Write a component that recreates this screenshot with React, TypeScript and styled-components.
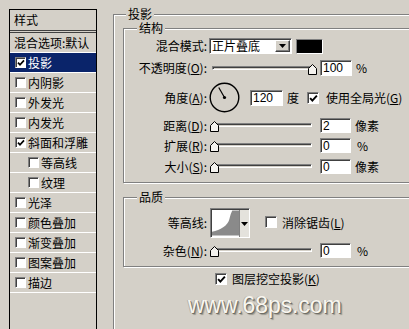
import * as React from 'react';
import styled, { createGlobalStyle } from 'styled-components';

const FACE = '#d4d0c8';
const SHADOW = '#808080';
const DARK = '#404040';
const CJK = `"Noto Sans CJK SC", "Noto Sans", sans-serif`;
const LATIN = `"Liberation Sans", Arial, sans-serif`;

const GlobalStyle = createGlobalStyle`
  html, body { margin: 0; padding: 0; background: ${FACE}; }
  body { font-family: ${CJK}; font-size: 12px; color: #000; }
  * { box-sizing: border-box; }
`;

const Window = styled.div`
  position: relative;
  display: flex;
  align-items: flex-start;
  width: 409px;
  height: 329px;
  overflow: hidden;
  background: ${FACE};
`;

// ---------- left list of styles ----------

const Sidebar = styled.div`
  flex: none;
  width: 88px;
  height: 340px;
  margin: 9px 0 0 9px;
  border: 1px solid #000;
  border-bottom: none;
`;

const SidebarHeader = styled.div`
  height: 23px;
  padding: 0 0 3px 4px;
  line-height: 20px;
  border-bottom: 3px double ${DARK};
`;

const SidebarItem = styled.div<{ $selected?: boolean; $indent?: boolean; $plain?: boolean }>`
  display: flex;
  align-items: center;
  gap: 2px;
  height: 20px;
  padding-left: ${(p) => (p.$plain ? 4 : p.$indent ? 18 : 5)}px;
  border-bottom: 1px solid #fff;
  white-space: nowrap;
  line-height: 14px;
  background: ${(p) => (p.$selected ? '#0a246a' : 'transparent')};
  color: ${(p) => (p.$selected ? '#fff' : '#000')};
`;

// ---------- shared controls ----------

const Box = styled.span<{ $size: number }>`
  flex: none;
  display: inline-flex;
  align-items: center;
  justify-content: center;
  width: ${(p) => p.$size}px;
  height: ${(p) => p.$size}px;
  background: #fff;
  border: 1px solid;
  border-color: ${SHADOW} #fff #fff ${SHADOW};
  box-shadow: inset 1px 1px 0 ${DARK};
`;

const CheckBox: React.FC<{ checked?: boolean; size?: number }> = ({ checked, size = 11 }) => (
  <Box $size={size}>
    {checked && (
      <svg width={size - 3} height={size - 3} viewBox="0 0 8 8" style={{ marginLeft: 1, marginTop: 1 }}>
        <path d="M1 3.6 L3 5.8 L7 1.4" fill="none" stroke="#000" strokeWidth="1.7" />
      </svg>
    )}
  </Box>
);

const Group = styled.fieldset<{ $width: number; $left?: number; $top?: number }>`
  margin: ${(p) => p.$top ?? 0}px 0 0 ${(p) => p.$left ?? 0}px;
  padding: 0;
  min-width: 0;
  width: ${(p) => p.$width}px;
  border: 1px solid ${SHADOW};
  box-shadow: inset 1px 1px 0 #fff, 1px 1px 0 #fff;
`;

const Legend = styled.legend<{ $offset: number }>`
  margin-left: ${(p) => p.$offset}px;
  padding: 0 2px;
  line-height: 14px;
  background: ${FACE};
`;

const Row = styled.div<{ $top: number; $height: number; $pad?: number }>`
  display: flex;
  align-items: center;
  margin-top: ${(p) => p.$top}px;
  height: ${(p) => p.$height}px;
  padding-left: ${(p) => p.$pad ?? 0}px;
  white-space: nowrap;
  line-height: 14px;
`;

const Label = styled.span`
  flex: none;
  width: 83px;
  text-align: right;
`;

const Text = styled.span<{ $gap?: number }>`
  flex: none;
  margin-left: ${(p) => p.$gap ?? 0}px;
`;

const Field = styled.span<{ $width: number; $gap: number; $height?: number }>`
  flex: none;
  display: flex;
  align-items: center;
  width: ${(p) => p.$width}px;
  height: ${(p) => p.$height ?? 15}px;
  margin-left: ${(p) => p.$gap}px;
  padding-left: 2px;
  background: #fff;
  border: 1px solid;
  border-color: ${SHADOW} #fff #fff ${SHADOW};
  box-shadow: inset 1px 1px 0 ${DARK};
  font-family: ${LATIN};
  font-size: 12px;
`;

const Select = styled(Field)`
  justify-content: space-between;
  padding-right: 1px;
  font-family: ${CJK};
`;

const DropButton = styled.span`
  flex: none;
  display: flex;
  align-items: center;
  justify-content: center;
  width: 15px;
  height: 12px;
  background: ${FACE};
  border: 1px solid;
  border-color: #fff ${DARK} ${DARK} #fff;
  box-shadow: inset -1px -1px 0 ${SHADOW};
`;

const Arrow = () => (
  <svg width="7" height="4" viewBox="0 0 7 4">
    <path d="M0 0 H7 L3.5 4 Z" fill="#000" />
  </svg>
);

const Swatch = styled.span`
  flex: none;
  width: 27px;
  height: 15px;
  margin-left: 4px;
  background: #000;
  border: 1px solid;
  border-color: ${SHADOW} #fff #fff ${SHADOW};
`;

const SliderWrap = styled.span`
  position: relative;
  flex: none;
  width: 106px;
  height: 15px;
  margin-left: 2px;
`;

const Track = styled.span`
  position: absolute;
  left: 3px;
  right: 3px;
  top: 5px;
  height: 4px;
  border: 1px solid;
  border-color: ${SHADOW} #fff #fff ${SHADOW};
  box-shadow: inset 1px 1px 0 ${DARK};
`;

const Thumb = styled.svg`
  position: absolute;
  top: 3px;
`;

const Slider: React.FC<{ value: number }> = ({ value }) => (
  <SliderWrap>
    <Track />
    <Thumb width="9" height="11" viewBox="0 0 9 11" style={{ left: 1 + value * 0.98 }}>
      <path d="M4.5 0.5 L8.5 4.5 V10.5 H0.5 V4.5 Z" fill="#f4f2ee" stroke="#000" />
    </Thumb>
  </SliderWrap>
);

const Dial = styled.svg`
  flex: none;
  margin-left: 2px;
`;

const Contour = styled.span`
  flex: none;
  display: flex;
  width: 40px;
  height: 30px;
  margin-left: 3px;
  border: 1px solid;
  border-color: ${SHADOW} #fff #fff ${SHADOW};
  box-shadow: inset 1px 1px 0 ${DARK};
  padding: 1px 0 0 1px;
  background: #fff;
`;

const ContourDrop = styled.span`
  flex: none;
  display: flex;
  align-items: center;
  justify-content: center;
  width: 10px;
  background: #e4e2dc;
  border-left: 1px solid ${SHADOW};
`;

const BottomRow = styled(Row)`
  padding-left: 101px;
`;

const Main = styled.div`
  flex: none;
  margin: 7px 0 0 16px;
`;

const Watermark = styled.div`
  position: absolute;
  left: 188px;
  top: 294px;
  font-family: ${LATIN};
  font-size: 23px;
  line-height: 1;
  letter-spacing: -0.1px;
  color: #f8f6ef;
  text-shadow: 1px 1px 0 #6f6d66, 2px 2px 1px #9c998f, -1px 0 0 #b5b2a8;
`;

const STYLES: { name: string; checked?: boolean; indent?: boolean; selected?: boolean }[] = [
  { name: '投影', checked: true, selected: true },
  { name: '内阴影' },
  { name: '外发光' },
  { name: '内发光' },
  { name: '斜面和浮雕', checked: true },
  { name: '等高线', indent: true },
  { name: '纹理', indent: true },
  { name: '光泽' },
  { name: '颜色叠加' },
  { name: '渐变叠加' },
  { name: '图案叠加' },
  { name: '描边' },
];

const angle = (120 * Math.PI) / 180;

export default function App() {
  return (
    <>
      <GlobalStyle />
      <Window>
        <Sidebar>
          <SidebarHeader>样式</SidebarHeader>
          <SidebarItem $plain>混合选项:默认</SidebarItem>
          {STYLES.map((s) => (
            <SidebarItem key={s.name} $selected={s.selected} $indent={s.indent}>
              <CheckBox checked={s.checked} />
              <span>{s.name}</span>
            </SidebarItem>
          ))}
        </Sidebar>

        <Main>
          <Group $width={310}>
            <Legend $offset={12}>投影</Legend>

            <Group $width={300} $left={9}>
              <Legend $offset={13}>结构</Legend>
              <Row $top={3} $height={16}>
                <Label>混合模式:</Label>
                <Select $width={83} $gap={2} $height={16}>
                  正片叠底
                  <DropButton>
                    <Arrow />
                  </DropButton>
                </Select>
                <Swatch />
              </Row>
              <Row $top={6} $height={16}>
                <Label>
                  不透明度(<u>O</u>):
                </Label>
                <Slider value={100} />
                <Field $width={32} $gap={5} $height={16}>100</Field>
                <Text $gap={4}>%</Text>
              </Row>
              <Row $top={6} $height={31}>
                <Label>
                  角度(<u>A</u>):
                </Label>
                <Dial width="31" height="31" viewBox="0 0 31 31">
                  <circle cx="15.5" cy="15.5" r="14.3" fill="none" stroke="#000" strokeWidth="1.4" />
                  <line
                    x1="15.5"
                    y1="15.5"
                    x2={15.5 + 11.5 * Math.cos(angle)}
                    y2={15.5 - 11.5 * Math.sin(angle)}
                    stroke="#000"
                    strokeWidth="1.2"
                  />
                  <circle cx="15.5" cy="15.5" r="1.6" fill="#000" />
                </Dial>
                <Field $width={33} $gap={10} $height={16}>120</Field>
                <Text $gap={4}>度</Text>
                <Text $gap={8}>
                  <CheckBox checked size={12} />
                </Text>
                <Text $gap={7}>
                  使用全局光(<u>G</u>)
                </Text>
              </Row>
              <Row $top={5} $height={15}>
                <Label>
                  距离(<u>D</u>):
                </Label>
                <Slider value={0} />
                <Field $width={31} $gap={5}>2</Field>
                <Text $gap={4}>像素</Text>
              </Row>
              <Row $top={5} $height={15}>
                <Label>
                  扩展(<u>R</u>):
                </Label>
                <Slider value={0} />
                <Field $width={31} $gap={5}>0</Field>
                <Text $gap={6}>%</Text>
              </Row>
              <Row $top={6} $height={15}>
                <Label>
                  大小(<u>S</u>):
                </Label>
                <Slider value={0} />
                <Field $width={31} $gap={5}>0</Field>
                <Text $gap={4}>像素</Text>
              </Row>
              <Row $top={0} $height={8} />
            </Group>

            <Group $width={300} $left={9} $top={7}>
              <Legend $offset={13}>品质</Legend>
              <Row $top={4} $height={30}>
                <Label>等高线:</Label>
                <Contour>
                  <svg width="28" height="26" viewBox="0 0 28 26">
                    <path d="M0 26 V22 C9 20 16 16 18 9 C19 5 20 2 21 0 H28 V26 Z" fill="#8a8a8a" />
                  </svg>
                  <ContourDrop>
                    <Arrow />
                  </ContourDrop>
                </Contour>
                <Text $gap={15}>
                  <CheckBox size={12} />
                </Text>
                <Text $gap={5}>
                  消除锯齿(<u>L</u>)
                </Text>
              </Row>
              <Row $top={5} $height={15}>
                <Label>
                  杂色(<u>N</u>):
                </Label>
                <Slider value={0} />
                <Field $width={31} $gap={5}>0</Field>
                <Text $gap={6}>%</Text>
              </Row>
              <Row $top={0} $height={8} />
            </Group>

            <BottomRow $top={5} $height={14}>
              <CheckBox checked size={12} />
              <Text $gap={5}>
                图层挖空投影(<u>K</u>)
              </Text>
            </BottomRow>
            <Row $top={0} $height={60} />
          </Group>
        </Main>

        <Watermark>www.68ps.com</Watermark>
      </Window>
    </>
  );
}
